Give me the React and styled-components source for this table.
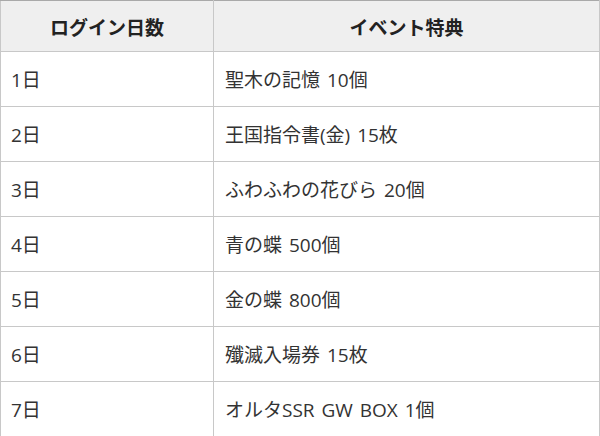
import React from "react";
import styled, { createGlobalStyle } from "styled-components";

const Global = createGlobalStyle`
  html, body { margin: 0; padding: 0; background: #fff; }
  body { font-family: "Open Sans", "Noto Sans CJK JP", sans-serif; }
`;

const Table = styled.table`
  width: 600px;
  height: 436px;
  border-collapse: collapse;
  table-layout: fixed;
  border: 1px solid #a9a9a9;
  color: #333;
  font-size: 19px;
`;

const HeadCell = styled.th`
  height: 50px;
  padding: 0;
  background: #efefef;
  font-family: "Noto Sans CJK JP", sans-serif;
  font-size: 19px;
  font-weight: bold;
  text-align: center;
  color: #222;
  border: 1px solid #c8c8c8;
  border-top-color: #a9a9a9;
  width: ${(p) => p.$w || "auto"};
`;

const Cell = styled.td`
  height: 54px;
  padding: 0 0 0 ${(p) => p.$pad}px;
  border: 1px solid #c8c8c8;
  vertical-align: middle;
  text-align: left;
  white-space: nowrap;
  font-weight: 400;
  word-spacing: 2px;
`;

const rows = [
  ["1日", "聖木の記憶 10個"],
  ["2日", "王国指令書(金) 15枚"],
  ["3日", "ふわふわの花びら 20個"],
  ["4日", "青の蝶 500個"],
  ["5日", "金の蝶 800個"],
  ["6日", "殲滅入場券 15枚"],
  ["7日", "オルタSSR GW BOX 1個"],
];

export default function App() {
  return (
    <>
      <Global />
      <Table>
        <thead>
          <tr>
            <HeadCell $w="212px">ログイン日数</HeadCell>
            <HeadCell>イベント特典</HeadCell>
          </tr>
        </thead>
        <tbody>
          {rows.map(([d, r]) => (
            <tr key={d}>
              <Cell $pad={10}>{d}</Cell>
              <Cell $pad={11}>{r}</Cell>
            </tr>
          ))}
        </tbody>
      </Table>
    </>
  );
}
